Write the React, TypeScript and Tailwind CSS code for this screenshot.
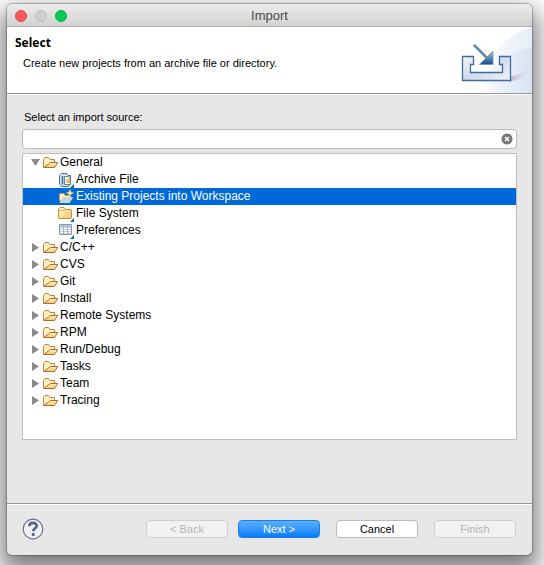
import { useState } from "react";
import type { ReactNode } from "react";

function OpenFolderIcon() {
  return (
    <svg width="16" height="16" viewBox="0 0 16 16" aria-hidden="true">
      <defs>
        <linearGradient id="openFolder" x1="0" y1="0" x2="0" y2="1">
          <stop offset="0" stopColor="#fff3c8" />
          <stop offset="1" stopColor="#fbc768" />
        </linearGradient>
      </defs>
      <path d="M.5 12.500V4.500L2 2.500H5.500L7 4.500H11.500V7.500" fill="#fff0c0" stroke="#bd823f" />
      <path d="M.8 12.500L5.500 9L7.500 7.500H14.800L11.500 12.500Z" fill="url(#openFolder)" stroke="#b3682c" strokeLinejoin="round" />
    </svg>
  );
}

function WizardCorner() {
  return <path d="M16 12V16H12Z" fill="#15649c" />;
}

function ArchiveIcon() {
  return (
    <svg width="16" height="16" viewBox="0 0 16 16" aria-hidden="true">
      <path d="M1.500 3.500L3.500 1.500H8.500L10.500 3.500H12.500V12L10.500 14.500H3.500L1.500 12.500Z" fill="#d4e3f4" stroke="#426fa5" />
      <path d="M4.500 4V12.500" stroke="#426b9d" strokeWidth="1.500" />
      <path d="M6.500 4.500H10L12.500 6.500V12.500H6.500Z" fill="#fff9df" stroke="#627da0" />
      <path d="M9 7.500H11.500V10.500H9Z" fill="#f5d37f" stroke="#b18b51" strokeWidth=".7" />
      <WizardCorner />
    </svg>
  );
}

function ProjectsIcon() {
  return (
    <svg width="16" height="16" viewBox="0 0 16 16" aria-hidden="true">
      <path d="M1.500 12V5.500L2.500 4.500H6L7 6.500H12.500V9" fill="#fff0c4" stroke="#c9a362" />
      <path d="M2 13.500L5 8.500H14.500L11.500 13.500Z" fill="#b8d8ef" stroke="#e4d4a2" strokeLinejoin="round" />
      <path d="M12 0.500L13 3L15.500 4L13 5L12 7.500L11 5L8.500 4L11 3Z" fill="#fff7cf" stroke="#dcb35a" strokeWidth=".8" />
    </svg>
  );
}

function ClosedFolderIcon() {
  return (
    <svg width="16" height="16" viewBox="0 0 16 16" aria-hidden="true">
      <defs>
        <linearGradient id="closedFolder" x1="0" y1="0" x2="1" y2="1">
          <stop offset="0" stopColor="#fff8d5" />
          <stop offset="1" stopColor="#f6c766" />
        </linearGradient>
      </defs>
      <path d="M.5 12V3L2 1.500H6L7.500 3.500H13L13.500 4V12L13 12.500H1Z" fill="url(#closedFolder)" stroke="#c28c3f" />
      <path d="M1 4.500H7" stroke="#e3b566" />
      <WizardCorner />
    </svg>
  );
}

function PreferencesIcon() {
  return (
    <svg width="16" height="16" viewBox="0 0 16 16" aria-hidden="true">
      <path d="M1.500 1.500H13.500V11.500H1.500Z" fill="#f7fafc" stroke="#8698ad" />
      <path d="M2 2H13V4H2Z" fill="#b7c8db" />
      <path d="M2 4.500H13M2 6.500H13M2 8.500H13M2 10.500H13" stroke="#b9c5d0" strokeWidth=".8" />
      <path d="M5.500 2V11M9.500 2V11" stroke="#a4b4c6" />
      <WizardCorner />
    </svg>
  );
}

function ImportBanner() {
  return (
    <svg width="76" height="66" viewBox="0 0 76 66" aria-hidden="true">
      <defs>
        <linearGradient id="sweep" x1="0" y1="0" x2="1" y2="0">
          <stop offset="0" stopColor="#fff" />
          <stop offset="1" stopColor="#e4ecf8" />
        </linearGradient>
        <linearGradient id="sweepLow" x1="0" y1="0" x2="1" y2="0">
          <stop offset="0" stopColor="#e5edf8" stopOpacity="0" />
          <stop offset="1" stopColor="#d8e3f4" />
        </linearGradient>
        <linearGradient id="tray" x1="0" y1="0" x2="1" y2="1">
          <stop offset="0" stopColor="#f4f4ef" />
          <stop offset=".5" stopColor="#d1dcec" />
          <stop offset="1" stopColor="#f1f4fa" />
        </linearGradient>
        <linearGradient id="arrowHead" x1="0" y1="0" x2="0" y2="1">
          <stop offset="0" stopColor="#a9c4df" />
          <stop offset="1" stopColor="#164b88" />
        </linearGradient>
        <radialGradient id="arrowGlow">
          <stop offset="0" stopColor="#fff7b8" />
          <stop offset="1" stopColor="#fff" stopOpacity="0" />
        </radialGradient>
        <linearGradient id="trayShadow" x1="0" y1="0" x2="1" y2="0">
          <stop offset="0" stopColor="#b98e9f" stopOpacity=".6" />
          <stop offset="1" stopColor="#e0cbd8" stopOpacity="0" />
        </linearGradient>
      </defs>
      <path d="M22 66C30 30 48 8 76 0V66Z" fill="url(#sweep)" />
      <path d="M26 66C34 38 52 24 76 21V66Z" fill="url(#sweepLow)" />
      <path d="M54 50L74 43L64 52L54 55Z" fill="url(#trayShadow)" />
      <ellipse cx="31" cy="29" rx="11" ry="9" fill="url(#arrowGlow)" />
      <path d="M6.500 29.500H17.500V37.500H14.500V45.500H46.500V37.500H43.500V29.500H54.500V53.500H6.500Z" fill="url(#tray)" stroke="#3c6ca3" strokeWidth="1.300" />
      <path d="M18.500 18.500L31 31" stroke="#5d88b2" strokeWidth="2.500" strokeLinecap="round" />
      <path d="M37 24V37.500H23.500Z" fill="url(#arrowHead)" stroke="#7299c0" strokeWidth=".8" />
    </svg>
  );
}

function Triangle({ open }: { open: boolean }) {
  return (
    <svg width="9" height="9" viewBox="0 0 9 9" aria-hidden="true">
      <path d={open ? "M0 1H9L4.500 8Z" : "M1 0L8 4.500L1 9Z"} fill="#8a8a8a" />
    </svg>
  );
}

const wizards: { name: string; icon: ReactNode }[] = [
  { name: "Archive File", icon: <ArchiveIcon /> },
  { name: "Existing Projects into Workspace", icon: <ProjectsIcon /> },
  { name: "File System", icon: <ClosedFolderIcon /> },
  { name: "Preferences", icon: <PreferencesIcon /> },
];

const categories = ["General", "C/C++", "CVS", "Git", "Install", "Remote Systems", "RPM", "Run/Debug", "Tasks", "Team", "Tracing"];

export default function App() {
  const [selected, setSelected] = useState("Existing Projects into Workspace");
  const [open, setOpen] = useState(true);
  const [filter, setFilter] = useState("");
  const plainButton = "h-[18px] w-[82px] rounded-[4px] border leading-4";

  return (
    <div className="flex min-h-screen flex-col bg-white pt-[4px] pr-[12px] pb-[10px] pl-[7px] font-['Liberation_Sans',Arial,sans-serif] text-[11px] leading-[17px] text-black">
      <main className="flex flex-1 flex-col overflow-hidden rounded-[5px] bg-[#e7e7e7] shadow-[0_0_1px_1px_rgba(0,0,0,0.25),0_12px_24px_6px_rgba(0,0,0,0.5)]">
        <header className="grid h-[23px] shrink-0 grid-cols-[1fr_auto_1fr] items-center border-b border-[#adadad] bg-linear-to-b from-[#ececec] to-[#d2d2d2] px-2 pt-px">
          <div className="flex gap-2">
            <button aria-label="Close" className="size-3 rounded-full border border-[#e2454a] bg-[#ff5a5e]" />
            <button aria-label="Minimize" disabled className="size-3 rounded-full border border-[#bcbcbc] bg-[#cfcfcf]" />
            <button aria-label="Zoom" className="size-3 rounded-full border border-[#05b045] bg-[#05cc50]" />
          </div>
          <h1 className="text-[13px] text-[#484848]">Import</h1>
        </header>

        <section className="flex h-[67px] shrink-0 justify-between border-b border-[#969696] bg-white pl-2">
          <div className="pt-[7px]">
            <h2 className="font-['Noto_Sans',sans-serif] text-[12px] font-bold">Select</h2>
            <p className="mt-1 pl-2">Create new projects from an archive file or directory.</p>
          </div>
          <ImportBanner />
        </section>

        <section className="flex flex-1 flex-col border-t border-white px-[15px] pt-[14px] pb-[63px]">
          <label htmlFor="source" className="pl-[2px]">Select an import source:</label>
          <div className="mt-[3px] flex h-5 items-center rounded-[4px] border border-[#b9b9b9] bg-white pr-[3px] pl-1">
            <input id="source" value={filter} onChange={(e) => setFilter(e.target.value)} className="min-w-0 flex-1 outline-none" />
            <button aria-label="Clear" onClick={() => setFilter("")}>
              <svg width="12" height="12" viewBox="0 0 12 12" aria-hidden="true">
                <circle cx="6" cy="6" r="5.500" fill="#777" />
                <path d="M4 4L8 8M8 4L4 8" stroke="#fff" strokeWidth="1.500" />
              </svg>
            </button>
          </div>
          <ul role="tree" aria-label="Import sources" className="mt-1 flex-1 border border-[#bebebe] bg-white text-[12px]">
            {categories.map((category) => (
              <li key={category} role="treeitem" aria-selected={false} aria-expanded={category === "General" && open}>
                <div className="flex h-[17px] items-center pl-2">
                  <button aria-label={"Toggle " + category} onClick={() => category === "General" && setOpen(!open)}>
                    <Triangle open={category === "General" && open} />
                  </button>
                  <span className="ml-[3px]"><OpenFolderIcon /></span>
                  <span className="ml-px">{category}</span>
                </div>
                {category === "General" && open && (
                  <ul role="group">
                    {wizards.map(({ name, icon }) => (
                      <li key={name} role="treeitem" aria-selected={selected === name}>
                        <button
                          onClick={() => setSelected(name)}
                          className={"flex h-[17px] w-full items-center gap-[2px] pl-[35px] " + (selected === name ? "bg-[#0069d9] text-white" : "")}
                        >
                          {icon}
                          <span>{name}</span>
                        </button>
                      </li>
                    ))}
                  </ul>
                )}
              </li>
            ))}
          </ul>
        </section>

        <footer className="flex h-[52px] shrink-0 items-center justify-between border-t border-[#969696] pr-4 pb-[2px] pl-[15px] shadow-[inset_0_1px_0_#fff]">
          <button aria-label="Help">
            <svg width="22" height="22" viewBox="0 0 22 22" aria-hidden="true">
              <circle cx="11" cy="11" r="9.800" fill="#f1f1f1" stroke="#64748e" strokeWidth="1.200" />
              <path d="M7.300 8.200C7.300 3.800 14.700 3.900 14.700 7.800C14.700 10.400 11.200 10.300 11.200 13.200" fill="none" stroke="#53698c" strokeWidth="2.800" />
              <rect x="9.700" y="15" width="3" height="3" rx="1" fill="#53698c" />
            </svg>
          </button>
          <div className="flex gap-4">
            <div className="flex gap-[10px]">
              <button disabled className={plainButton + " border-[#cfcfcf] bg-[#f2f2f2] text-[#b5b5b5]"}>&lt; Back</button>
              <button className={plainButton + " border-[#1a7cf0] bg-linear-to-b from-[#5ab1fa] to-[#007bfd] text-white"}>Next &gt;</button>
            </div>
            <button className={plainButton + " border-[#bcbcbc] bg-white"}>Cancel</button>
            <button disabled className={plainButton + " border-[#cfcfcf] bg-[#f2f2f2] text-[#b5b5b5]"}>Finish</button>
          </div>
        </footer>
      </main>
    </div>
  );
}
